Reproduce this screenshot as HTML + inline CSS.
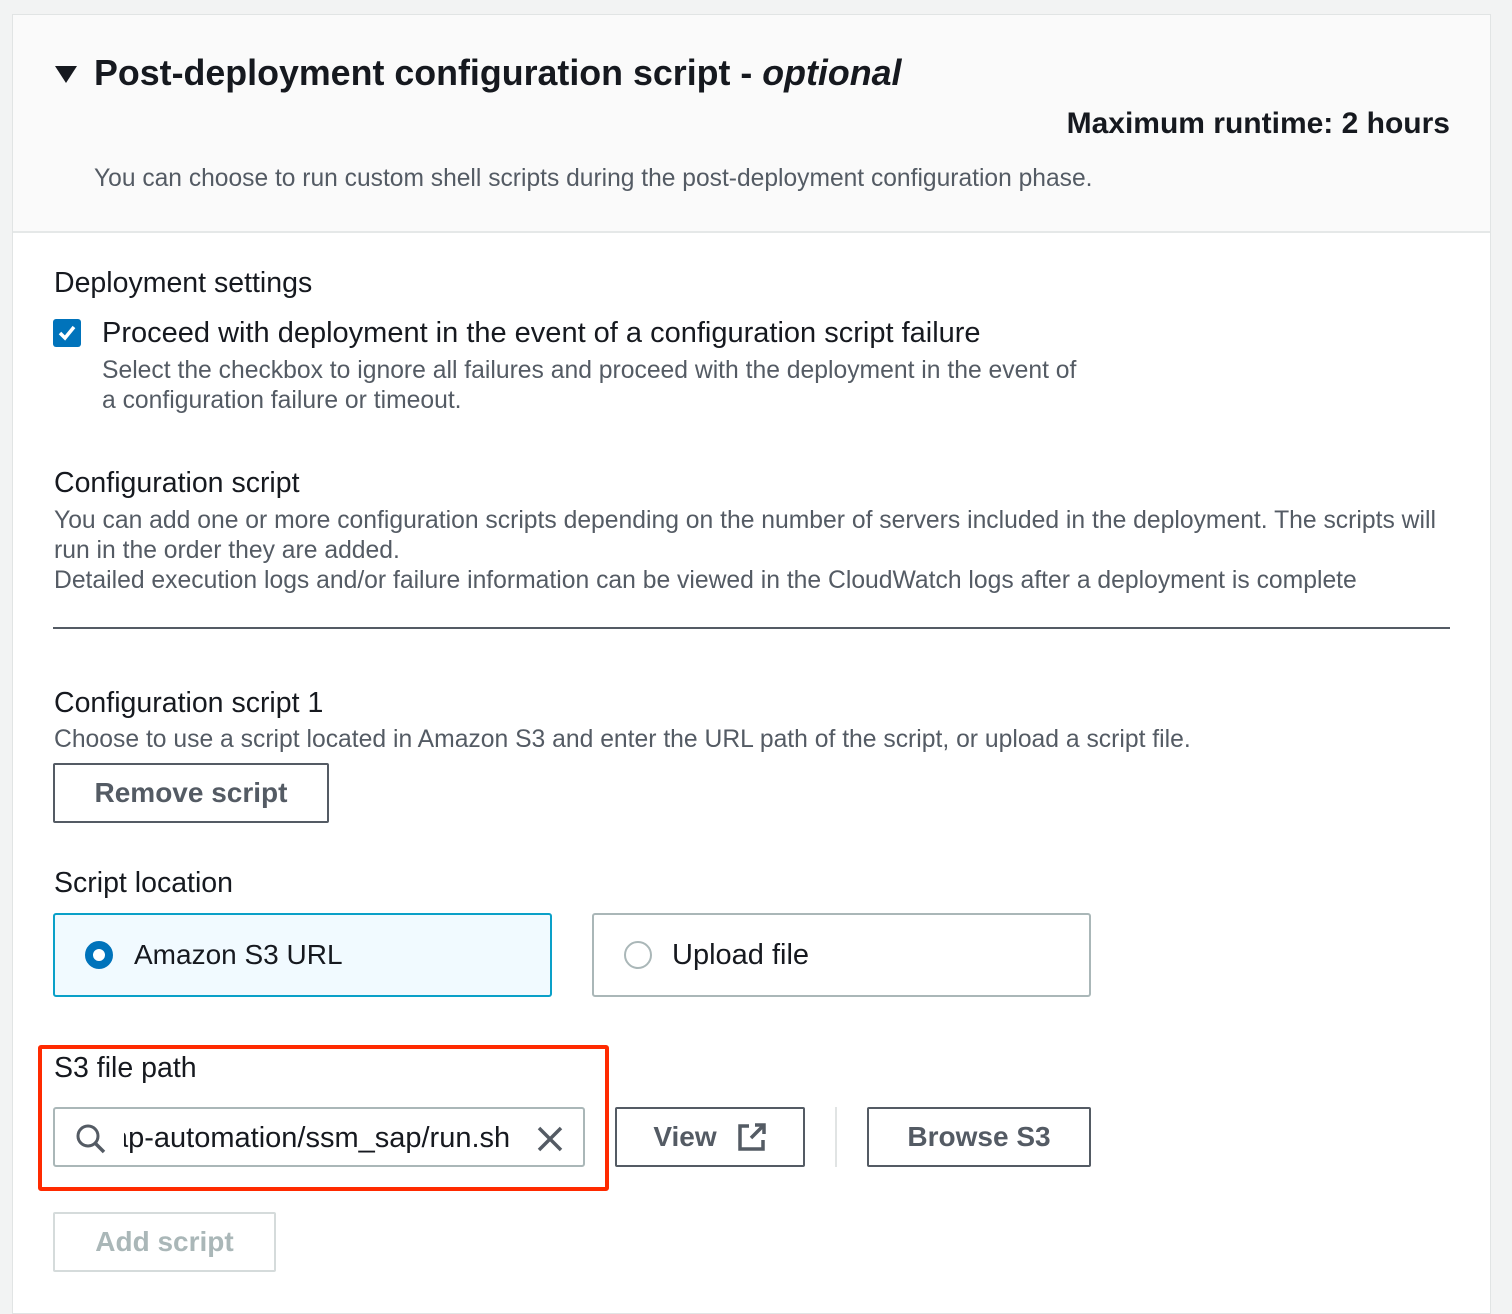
<!DOCTYPE html>
<html><head><meta charset="utf-8"><style>
*{box-sizing:border-box;margin:0;padding:0}
body{width:1512px;height:1304px;background:#f2f3f3;font-family:"Liberation Sans",sans-serif;color:#16191f;position:relative;overflow:hidden}
.panel{position:absolute;left:12px;top:14px;width:1479px;height:1300px;background:#fff;border:1px solid #e1e4e4}
.hdr{position:absolute;left:0;top:0;width:100%;height:218px;background:#fafafa;border-bottom:2px solid #e5e8e8}
.a{position:absolute;white-space:nowrap}
.g{color:#545b64}
.btn{position:absolute;border:2px solid #545b64;border-radius:2px;background:#fff;font-weight:bold;color:#545b64;font-size:28px;display:flex;align-items:center;justify-content:center}
.h{font-size:28.5px}
</style></head><body>
<div class="panel">
<div class="hdr"></div>
</div>
<svg class="a" style="left:55px;top:66px" width="22" height="18"><polygon points="0,0 22,0 11,17" fill="#16191f"/></svg>
<div class="a" style="left:94px;top:53px;font-size:35.8px;font-weight:bold">Post-deployment configuration script - <i>optional</i></div>
<div class="a" style="right:62px;top:107px;font-size:30px;font-weight:bold">Maximum runtime: 2 hours</div>
<div class="a g" style="left:94px;top:165px;font-size:24.6px">You can choose to run custom shell scripts during the post-deployment configuration phase.</div>

<div class="a h" style="left:54px;top:267px">Deployment settings</div>
<div class="a" style="left:53px;top:319px;width:28px;height:28px;background:#0073bb;border-radius:3px"><svg width="28" height="28"><path d="M7 14 L12 19 L21 8" stroke="#fff" stroke-width="3.5" fill="none"/></svg></div>
<div class="a" style="left:102px;top:317px;font-size:29px">Proceed with deployment in the event of a configuration script failure</div>
<div class="a g" style="left:102px;top:356px;font-size:24.7px;line-height:30px">Select the checkbox to ignore all failures and proceed with the deployment in the event of<br>a configuration failure or timeout.</div>

<div class="a h" style="left:54px;top:467px">Configuration script</div>
<div class="a g" style="left:54px;top:506px;font-size:24.7px;line-height:30px">You can add one or more configuration scripts depending on the number of servers included in the deployment. The scripts will<br>run in the order they are added.<br>Detailed execution logs and/or failure information can be viewed in the CloudWatch logs after a deployment is complete</div>
<div class="a" style="left:53px;top:627px;width:1397px;height:2px;background:#545b64"></div>

<div class="a h" style="left:54px;top:687px">Configuration script 1</div>
<div class="a g" style="left:54px;top:726px;font-size:24.7px">Choose to use a script located in Amazon S3 and enter the URL path of the script, or upload a script file.</div>
<div class="btn" style="left:53px;top:763px;width:276px;height:60px">Remove script</div>

<div class="a h" style="left:54px;top:867px">Script location</div>
<div class="a" style="left:53px;top:913px;width:499px;height:84px;background:#f1faff;border:2px solid #0aa0c8;border-radius:3px"></div>
<div class="a" style="left:85px;top:941px;width:28px;height:28px;border-radius:50%;border:8px solid #0073bb;background:#fff"></div>
<div class="a" style="left:134px;top:939px;font-size:28px">Amazon S3 URL</div>
<div class="a" style="left:592px;top:913px;width:499px;height:84px;background:#fff;border:2px solid #aab7b8;border-radius:3px"></div>
<div class="a" style="left:624px;top:941px;width:28px;height:28px;border-radius:50%;border:2px solid #aab7b8"></div>
<div class="a" style="left:672px;top:939px;font-size:29px">Upload file</div>

<div class="a" style="left:38px;top:1045px;width:571px;height:146px;border:4px solid #ff2a00;border-radius:3px"></div>
<div class="a h" style="left:54px;top:1052px">S3 file path</div>
<div class="a" style="left:53px;top:1107px;width:532px;height:60px;border:2px solid #aab7b8;border-radius:3px;background:#fff;overflow:hidden">
<svg class="a" style="left:20px;top:14px" width="32" height="32"><circle cx="13" cy="13" r="10" stroke="#545b64" stroke-width="3" fill="none"/><path d="M20 20 L29 29" stroke="#545b64" stroke-width="3.5"/></svg>
<div class="a" style="left:69px;top:13px;width:396px;overflow:hidden;font-size:29px;white-space:nowrap"><span style="margin-left:-12px">ap-automation/ssm_sap/run.sh</span></div>
<svg class="a" style="left:480px;top:15px" width="30" height="30"><path d="M4 4 L26 26 M26 4 L4 26" stroke="#545b64" stroke-width="3.5"/></svg>
</div>
<div class="btn" style="left:615px;top:1107px;width:190px;height:60px"><span>View</span><svg style="margin-left:20px" width="30" height="30"><path d="M12 4 H3 V27 H26 V18" stroke="#545b64" stroke-width="3.5" fill="none"/><path d="M14 16 L27 3 M18 3 H27 V12" stroke="#545b64" stroke-width="3.5" fill="none"/></svg></div>
<div class="a" style="left:835px;top:1107px;width:2px;height:60px;background:#e1e4e4"></div>
<div class="btn" style="left:867px;top:1107px;width:224px;height:60px">Browse S3</div>
<div class="btn" style="left:53px;top:1212px;width:223px;height:60px;border-color:#d5dbdb;color:#aab7b8">Add script</div>
</body></html>
